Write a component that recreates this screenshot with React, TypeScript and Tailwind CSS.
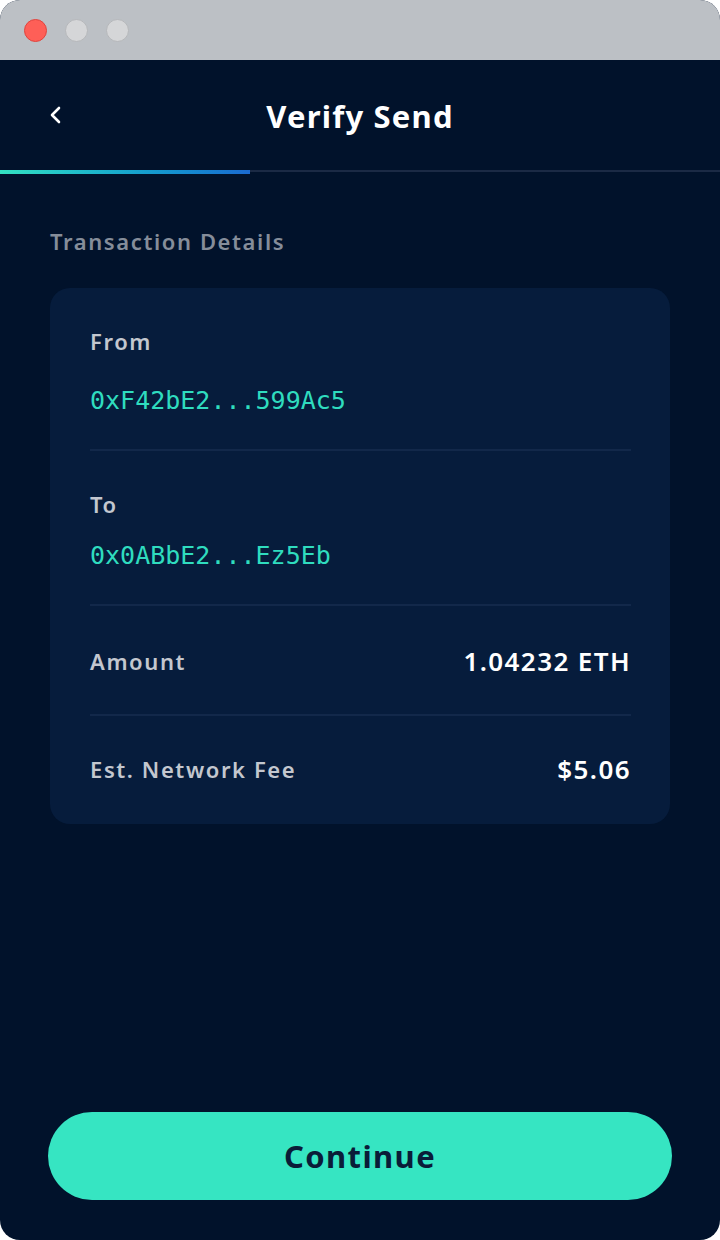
import React from 'react';

type Row = { label: string; value: string };

const ADDRESSES = [
  { label: 'From', value: '0xF42bE2...599Ac5', gap: 'mt-[31px]', after: 'mb-[39px]' },
  { label: 'To', value: '0x0ABbE2...Ez5Eb', gap: 'mt-[23px]', after: 'mb-[40px]' },
];

const TOTALS: Row[] = [
  { label: 'Amount', value: '1.04232 ETH' },
  { label: 'Est. Network Fee', value: '$5.06' },
];

const sans = { fontFamily: '"Noto Sans", "Open Sans", sans-serif' };

const App: React.FC = () => {
  return (
    <div className="w-[720px] h-[1240px] bg-white" style={sans}>
      <div className="flex flex-col h-full rounded-[20px] overflow-hidden bg-[#01122b]">
        {/* window chrome */}
        <div className="h-[60px] shrink-0 bg-[#bcc0c5] flex items-center gap-[18px] pl-[24px]">
          <span className="w-[23px] h-[23px] rounded-full bg-[#fe5f57] border border-[#e0443e]" />
          <span className="w-[23px] h-[23px] rounded-full bg-[#d5d6d8] border border-[#b5b7ba]" />
          <span className="w-[23px] h-[23px] rounded-full bg-[#d5d6d8] border border-[#b5b7ba]" />
        </div>

        {/* header */}
        <div className="h-[110px] shrink-0 flex items-center px-[48px]">
          <button className="w-[20px] h-[24px] flex items-center text-white">
            <svg width="14" height="22" viewBox="0 0 14 22" fill="none">
              <path d="M11 4 L4 11 L11 18" stroke="currentColor" strokeWidth="2.6" strokeLinecap="round" strokeLinejoin="round" />
            </svg>
          </button>
          <h1 className="flex-1 text-center text-white text-[31px] font-bold tracking-[1.2px] pr-[20px] pt-[2px]">Verify Send</h1>
        </div>

        {/* progress */}
        <div className="h-[4px] shrink-0 flex items-start">
          <div className="w-[250px] h-[4px] bg-gradient-to-r from-[#34e1c1] to-[#1b6ad0]" />
          <div className="flex-1 h-[2px] bg-[#1b2a45]" />
        </div>

        {/* content */}
        <div className="flex-1 flex flex-col px-[50px] pt-[56px] pb-[40px]">
          <p className="text-[22px] font-semibold text-[#858d9a] leading-none tracking-[1.6px]">Transaction Details</p>

          <div className="mt-[36px] w-[620px] bg-[#061c3c] rounded-[20px] pl-[40px] pr-[39px] pt-[39px] pb-[16px]">
            {ADDRESSES.map(a => (
              <div key={a.label} className={`border-b-2 border-[#12284a] pb-[33px] ${a.after}`}>
                <p className="text-[22px] font-semibold text-[#c3c7cf] leading-[28px] tracking-[1.6px]">{a.label}</p>
                <p
                  className={`${a.gap} text-[25px] text-[#2fdcbf] leading-[30px]`}
                  style={{ fontFamily: '"DejaVu Sans Mono", monospace' }}
                >
                  {a.value}
                </p>
              </div>
            ))}
            {TOTALS.map((t, i) => (
              <div
                key={t.label}
                className={
                  i === 0
                    ? 'flex items-center justify-between pb-[38px] mb-[38px] border-b-2 border-[#12284a]'
                    : 'flex items-center justify-between pb-[24px]'
                }
              >
                <span className="text-[22px] font-semibold text-[#c3c7cf] leading-[28px] tracking-[1.6px]">{t.label}</span>
                <span className="text-[26px] font-semibold text-white leading-[30px] tracking-[1.4px]">{t.value}</span>
              </div>
            ))}
          </div>

          <div className="flex-1" />

          <button className="-mx-[2px] h-[88px] rounded-full bg-[#36e5c2] text-[#0a1c38] text-[31px] font-bold tracking-[1.4px]">
            Continue
          </button>
        </div>
      </div>
    </div>
  );
};

export default App;
